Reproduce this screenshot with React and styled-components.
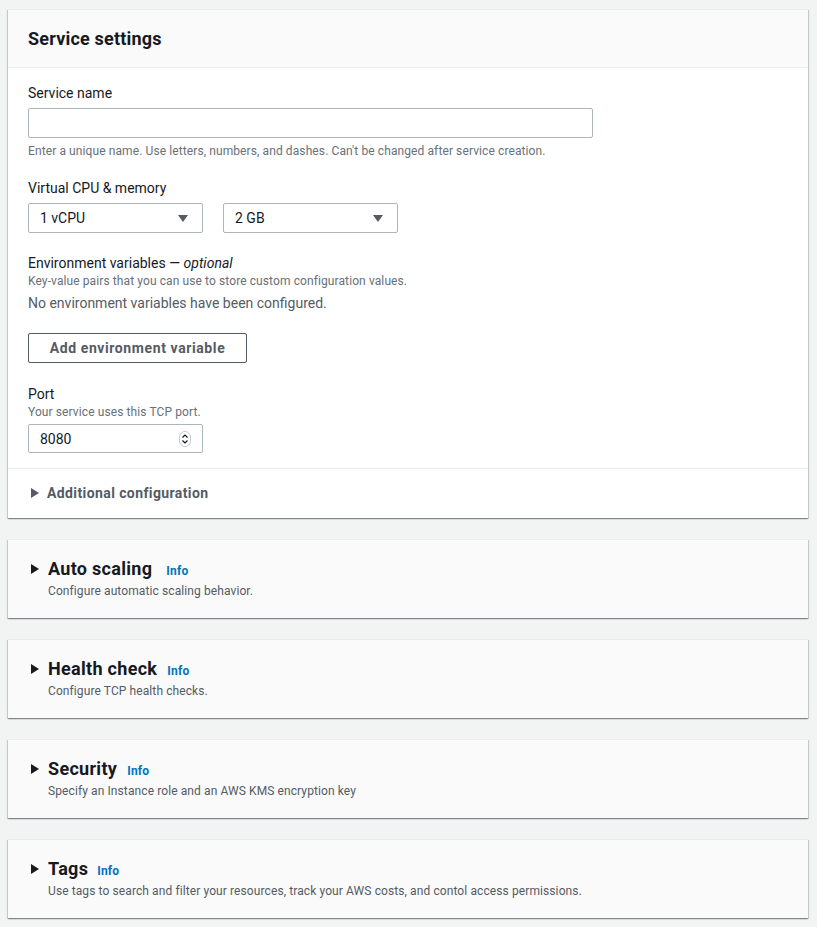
import React from 'react'
import styled, { createGlobalStyle } from 'styled-components'

const colors = {
  page: '#f2f3f3',
  text: '#16191f',
  grey: '#545b64',
  hint: '#687078',
  border: '#aab7b8',
  divider: '#eaeded',
  link: '#0073bb',
  header: '#fafafa',
}

const GlobalStyle = createGlobalStyle`
  html, body {
    margin: 0;
    padding: 0;
    background: ${colors.page};
  }
  body {
    font-family: Roboto, 'Liberation Sans', Arial, sans-serif;
    color: ${colors.text};
  }
`

const Page = styled.div`
  display: flex;
  flex-direction: column;
  gap: 21px;
  padding: 9px 9px 9px 8px;
  width: 800px;
`

const Card = styled.section`
  background: ${(p) => (p.$collapsed ? colors.header : '#fff')};
  border-top: 1px solid ${colors.divider};
  box-shadow: 0 1px 1px 0 rgba(0, 28, 36, 0.3), 1px 1px 1px 0 rgba(0, 28, 36, 0.15),
    -1px 1px 1px 0 rgba(0, 28, 36, 0.15);
`

const CardHeader = styled.div`
  background: ${colors.header};
  border-bottom: 1px solid ${colors.divider};
  padding: 17px 20px 16px;
`

const CardTitle = styled.h2`
  margin: 0;
  font-size: 18px;
  line-height: 24px;
  font-weight: 700;
  letter-spacing: 0.2px;
`

const CardBody = styled.div`
  display: flex;
  flex-direction: column;
  padding: 15px 20px 16px;
`

const Field = styled.div`
  display: flex;
  flex-direction: column;
  margin-bottom: ${(p) => p.$spacing ?? 20}px;
`

const Label = styled.label`
  font-size: 14px;
  line-height: 20px;
  margin-bottom: ${(p) => (p.$tight ? 0 : 5)}px;
  em {
    font-style: italic;
  }
`

const Description = styled.div`
  font-size: 12px;
  line-height: 16px;
  letter-spacing: 0.1px;
  color: ${colors.hint};
  margin-bottom: ${(p) => p.$after || 0}px;
`

const Hint = styled(Description)`
  margin-top: 5px;
`

const TextInput = styled.input`
  box-sizing: border-box;
  width: ${(p) => p.$w}px;
  height: ${(p) => p.$h || 30}px;
  border: 1px solid ${colors.border};
  border-radius: 2px;
  padding: 0 11px;
  font: inherit;
  font-size: 14px;
  color: ${colors.text};
  background: #fff;
  outline: none;
`

const EmptyText = styled.div`
  font-size: 14px;
  line-height: 20px;
  color: ${colors.grey};
`

const Row = styled.div`
  display: flex;
  gap: 20px;
`

const Select = styled.div`
  box-sizing: border-box;
  width: 175px;
  height: 30px;
  border: 1px solid ${colors.border};
  border-radius: 2px;
  display: flex;
  align-items: center;
  justify-content: space-between;
  padding: 0 14px 0 11px;
  font-size: 14px;
  background: #fff;
`

const Button = styled.button`
  align-self: flex-start;
  box-sizing: border-box;
  width: 219px;
  height: 30px;
  margin-top: 20px;
  margin-bottom: 21px;
  border: 1px solid ${colors.grey};
  border-radius: 2px;
  background: #fff;
  color: ${colors.grey};
  font: inherit;
  font-size: 14px;
  font-weight: 700;
  letter-spacing: 0.6px;
`

const NumberWrap = styled.div`
  position: relative;
  width: 175px;
`

const Spinner = styled.svg`
  position: absolute;
  right: 12px;
  top: 7px;
`

const Divider = styled.div`
  height: 1px;
  background: ${colors.divider};
  margin: 15px -20px 0;
`

const Expander = styled.div`
  display: flex;
  align-items: center;
  gap: 8px;
  padding: 15px 0 0 3px;
  font-size: 14px;
  line-height: 18px;
  font-weight: 700;
  letter-spacing: 0.4px;
  color: ${colors.grey};
`

const CollapsedBody = styled.div`
  padding: 18px 20px 19px 23px;
  display: flex;
  align-items: flex-start;
  gap: 9px;
`

const CaretBox = styled.div`
  display: flex;
  align-items: center;
  height: 22px;
`

const TitleRow = styled.div`
  display: flex;
  align-items: baseline;
  gap: ${(p) => p.$gap}px;
`

const SectionTitle = styled.h3`
  margin: 0;
  font-size: 18px;
  line-height: 22px;
  font-weight: 700;
  letter-spacing: 0.3px;
`

const InfoLink = styled.a`
  font-size: 12px;
  font-weight: 700;
  letter-spacing: 0.2px;
  color: ${colors.link};
  text-decoration: none;
`

const SectionDesc = styled.div`
  font-size: 12px;
  line-height: 16px;
  letter-spacing: 0.1px;
  color: ${colors.grey};
  margin-top: 3px;
`

const Caret = ({ color = colors.text, size = 10 }) => (
  <svg width={8} height={size} viewBox="0 0 8 10" style={{ display: 'block', flexShrink: 0 }}>
    <path d="M0 0 L8 5 L0 10 Z" fill={color} />
  </svg>
)

const DownArrow = () => (
  <svg width={10} height={7} viewBox="0 0 10 7" style={{ display: 'block' }}>
    <path d="M0 0 H10 L5 7 Z" fill={colors.grey} />
  </svg>
)

const sections = [
  { title: 'Auto scaling', gap: 14, desc: 'Configure automatic scaling behavior.' },
  { title: 'Health check', gap: 10, desc: 'Configure TCP health checks.' },
  { title: 'Security', gap: 10, desc: 'Specify an Instance role and an AWS KMS encryption key' },
  {
    title: 'Tags',
    gap: 9,
    desc: 'Use tags to search and filter your resources, track your AWS costs, and contol access permissions.',
  },
]

const CollapsedSection = ({ title, desc, gap }) => (
  <Card $collapsed>
    <CollapsedBody>
      <CaretBox>
        <Caret />
      </CaretBox>
      <div>
        <TitleRow $gap={gap}>
          <SectionTitle>{title}</SectionTitle>
          <InfoLink href="#">Info</InfoLink>
        </TitleRow>
        <SectionDesc>{desc}</SectionDesc>
      </div>
    </CollapsedBody>
  </Card>
)

export default function App() {
  return (
    <>
      <GlobalStyle />
      <Page>
        <Card>
          <CardHeader>
            <CardTitle>Service settings</CardTitle>
          </CardHeader>
          <CardBody>
            <Field $spacing={19}>
              <Label>Service name</Label>
              <TextInput $w={565} />
              <Hint>
                Enter a unique name. Use letters, numbers, and dashes. Can't be changed after
                service creation.
              </Hint>
            </Field>
            <Field $spacing={20}>
              <Label>Virtual CPU &amp; memory</Label>
              <Row>
                <Select>
                  <span>1 vCPU</span>
                  <DownArrow />
                </Select>
                <Select>
                  <span>2 GB</span>
                  <DownArrow />
                </Select>
              </Row>
            </Field>
            <Label $tight>
              Environment variables — <em>optional</em>
            </Label>
            <Description $after={4}>
              Key-value pairs that you can use to store custom configuration values.
            </Description>
            <EmptyText>No environment variables have been configured.</EmptyText>
            <Button>Add environment variable</Button>
            <Field $spacing={0}>
              <Label $tight>Port</Label>
              <Description $after={4}>Your service uses this TCP port.</Description>
              <NumberWrap>
                <TextInput $w={175} $h={29} defaultValue="8080" />
                <Spinner width={12} height={16} viewBox="0 0 12 16">
                  <rect x={0.5} y={0.5} width={11} height={15} rx={5.5} fill="#fff" stroke="#c6cbcc" />
                  <path d="M3.5 6.5 L6 4 L8.5 6.5" fill="none" stroke="#16191f" strokeWidth={1.2} />
                  <path d="M3.5 9.5 L6 12 L8.5 9.5" fill="none" stroke="#16191f" strokeWidth={1.2} />
                </Spinner>
              </NumberWrap>
            </Field>
            <Divider />
            <Expander>
              <Caret color={colors.grey} size={10} />
              <span>Additional configuration</span>
            </Expander>
          </CardBody>
        </Card>
        {sections.map((s) => (
          <CollapsedSection key={s.title} {...s} />
        ))}
      </Page>
    </>
  )
}
